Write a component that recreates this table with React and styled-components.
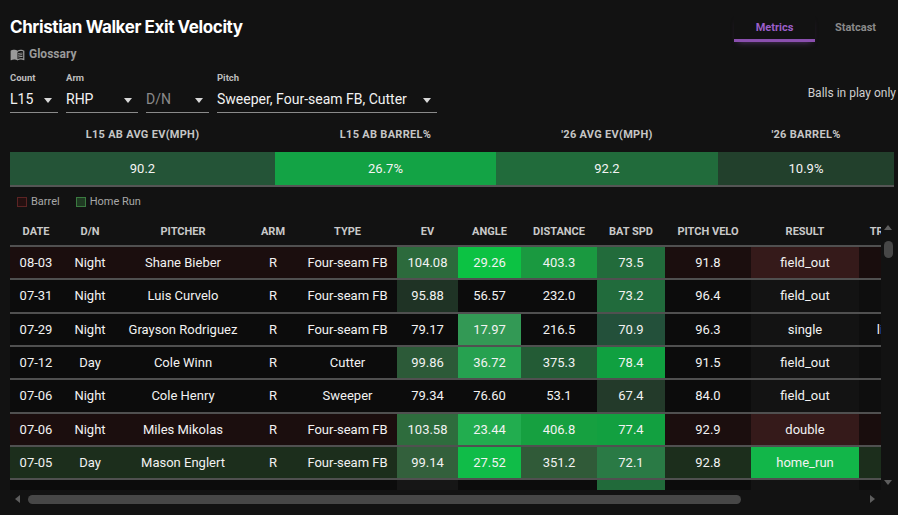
import React from 'react';
import styled, { createGlobalStyle } from 'styled-components';
import { MdMenuBook } from 'react-icons/md';

const Global = createGlobalStyle`
  html, body { margin: 0; padding: 0; background: #121212; }
  body {
    font-family: Roboto, "Noto Sans", "Liberation Sans", sans-serif;
    color: #eeeeee;
    width: 898px;
    height: 515px;
    overflow: hidden;
  }
  * { box-sizing: border-box; }
`;

const Page = styled.div`
  display: flex;
  flex-direction: column;
  padding: 14px 4px 0 10px;
`;

const TopRow = styled.div`
  display: flex;
  justify-content: space-between;
  align-items: flex-start;
`;

const TitleBlock = styled.div`
  display: flex;
  flex-direction: column;
  padding-top: 3px;
`;

const Title = styled.h1`
  margin: 0;
  font-family: Inter, "Open Sans", sans-serif;
  font-weight: 700;
  font-size: 17px;
  line-height: 20px;
  letter-spacing: -0.4px;
  color: #ffffff;
`;

const Glossary = styled.div`
  display: flex;
  align-items: center;
  gap: 4px;
  margin-top: 9px;
  font-size: 12px;
  line-height: 16px;
  font-weight: 700;
  color: #9a9a9a;
  cursor: pointer;
`;

const Tabs = styled.div`
  display: flex;
  margin-right: -2px;
`;

const Tab = styled.div`
  width: 81px;
  text-align: center;
  font-size: 11px;
  line-height: 14px;
  font-weight: 700;
  padding: 7px 0 4px;
  color: ${(p) => (p.$active ? '#9b5fc9' : '#8a8a8a')};
  border-bottom: 3px solid ${(p) => (p.$active ? '#8a4fae' : 'transparent')};
  box-shadow: ${(p) => (p.$active ? '0 4px 6px -4px rgba(155, 89, 200, 0.5)' : 'none')};
`;

const FilterRow = styled.div`
  display: flex;
  align-items: center;
  justify-content: space-between;
  margin-top: 10px;
`;

const Filters = styled.div`
  display: flex;
  gap: 8px;
`;

const Field = styled.div`
  display: flex;
  flex-direction: column;
  width: ${(p) => p.$w}px;
`;

const FieldLabel = styled.div`
  font-size: 9.5px;
  line-height: 12px;
  height: 12px;
  font-weight: 700;
  color: #bdbdbd;
  margin-bottom: 6px;
`;

const Select = styled.div`
  display: flex;
  align-items: center;
  justify-content: space-between;
  padding: 0 6px 4px 0;
  border-bottom: 1px solid #8a8a8a;
  font-size: 14px;
  line-height: 18px;
  color: ${(p) => (p.$placeholder ? '#8a8a8a' : '#f2f2f2')};
  white-space: nowrap;
`;

const Caret = styled.span`
  width: 0;
  height: 0;
  border-left: 4.5px solid transparent;
  border-right: 4.5px solid transparent;
  border-top: 5px solid #d8d8d8;
  margin-top: 2px;
`;

const BallsToggle = styled.div`
  font-size: 12px;
  color: #cfcfcf;
  margin-right: -2px;
`;

const Summary = styled.div`
  display: grid;
  grid-template-columns: 265px 221px 222px 1fr;
  margin-top: 15px;
`;

const SumLabel = styled.div`
  text-align: center;
  font-size: 11px;
  line-height: 14px;
  font-weight: 700;
  letter-spacing: 0.3px;
  color: #c6c6c6;
  padding-bottom: 10px;
`;

const SumValue = styled.div`
  height: 35px;
  display: flex;
  align-items: center;
  justify-content: center;
  font-size: 13px;
  color: #f4f4f4;
  background: ${(p) => p.$bg};
  border-bottom: 2px solid #555555;
`;

const Legend = styled.div`
  display: flex;
  align-items: center;
  gap: 16px;
  margin-top: 9px;
  padding-left: 7px;
  height: 11px;
`;

const LegendItem = styled.div`
  display: flex;
  align-items: center;
  gap: 4px;
  font-size: 11px;
  color: #a8a8a8;
`;

const Swatch = styled.span`
  width: 10px;
  height: 10px;
  border: 1px solid ${(p) => p.$border};
  background: ${(p) => p.$fill};
`;

const TableFrame = styled.div`
  margin-top: 9px;
  display: grid;
  grid-template-columns: 871px 13px;
  grid-template-rows: 274px 14px;
  width: 884px;
`;

const Viewport = styled.div`
  overflow: hidden;
`;

const VBar = styled.div`
  display: flex;
  flex-direction: column;
  align-items: center;
  padding: 9px 0 5px 1px;
`;

const HBar = styled.div`
  display: flex;
  align-items: center;
  padding: 4px 6px 0 5px;
`;

const Corner = styled.div``;

const Spacer = styled.div`
  flex: 1;
`;

const Thumb = styled.div`
  background: #474747;
  border-radius: 5px;
  width: ${(p) => p.$w}px;
  height: ${(p) => p.$h}px;
  margin: ${(p) => p.$m || 0};
`;

const Arrow = styled.span`
  width: 0;
  height: 0;
  border-style: solid;
  border-color: transparent;
  ${(p) => p.$dir === 'up' && 'border-width: 0 4.5px 5px; border-bottom-color: #5e5e5e;'}
  ${(p) => p.$dir === 'down' && 'border-width: 5px 4.5px 0; border-top-color: #5e5e5e;'}
  ${(p) => p.$dir === 'left' && 'border-width: 4px 5px 4px 0; border-right-color: #5e5e5e;'}
  ${(p) => p.$dir === 'right' && 'border-width: 4px 0 4px 5px; border-left-color: #5e5e5e;'}
`;

const Table = styled.table`
  border-collapse: separate;
  border-spacing: 0;
  table-layout: fixed;
  width: 1030px;
`;

const Th = styled.th`
  position: sticky;
  top: 0;
  z-index: 1;
  background: #121212;
  height: 31px;
  padding: 2px 0 0;
  font-size: 11px;
  font-weight: 700;
  color: #c9c9c9;
  text-align: center;
  border-bottom: 2px solid #505050;
  white-space: nowrap;
  overflow: hidden;
`;

const Tr = styled.tr`
  background: ${(p) => p.$bg};
`;

const Td = styled.td`
  height: 33.33px;
  padding: 0;
  text-align: center;
  font-size: 13px;
  color: #f2f2f2;
  white-space: nowrap;
  overflow: hidden;
  border-bottom: 2px solid #505050;
  background: ${(p) => p.$bg || 'transparent'};
`;

const COLS = [
  ['DATE', 52], ['D/N', 56], ['PITCHER', 130], ['ARM', 50], ['TYPE', 99],
  ['EV', 61], ['ANGLE', 63], ['DISTANCE', 76], ['BAT SPD', 68], ['PITCH VELO', 86],
  ['RESULT', 108], ['TRAJECTORY', 90], ['SPRAY', 91],
];

const ROWBG = { none: '#0c0c0c', barrel: '#1b0e0e', hr: '#1c2e1c' };
const RESBG = { none: '#131313', barrel: '#351a1a', hr: '#12b649' };
const TRBG = { none: '#0e0e0e', barrel: '#190d0d', hr: '#1c2e1c' };

const BASE = [
  { d: '08-03', dn: 'Night', p: 'Shane Bieber', t: 'Four-seam FB', ev: '104.08', an: '29.26', di: '403.3', bs: '73.5', pv: '91.8', r: 'field_out', tr: 'fly_ball', sp: 'Pull', k: 'barrel', c: ['#2c6a3c', '#0cc243', '#1a9940', '#226b3b'] },
  { d: '07-31', dn: 'Night', p: 'Luis Curvelo', t: 'Four-seam FB', ev: '95.88', an: '56.57', di: '232.0', bs: '73.2', pv: '96.4', r: 'field_out', tr: 'popup', sp: 'Center', k: 'none', c: ['#1f3325', null, null, '#216b3c'] },
  { d: '07-29', dn: 'Night', p: 'Grayson Rodriguez', t: 'Four-seam FB', ev: '79.17', an: '17.97', di: '216.5', bs: '70.9', pv: '96.3', r: 'single', tr: 'line_drive', sp: 'Oppo', k: 'none', c: [null, '#339955', null, '#23503a'] },
  { d: '07-12', dn: 'Day', p: 'Cole Winn', t: 'Cutter', ev: '99.86', an: '36.72', di: '375.3', bs: '78.4', pv: '91.5', r: 'field_out', tr: 'fly_ball', sp: 'Center', k: 'none', c: ['#2c5a38', '#26a150', '#235b35', '#10a040'] },
  { d: '07-06', dn: 'Night', p: 'Cole Henry', t: 'Sweeper', ev: '79.34', an: '76.60', di: '53.1', bs: '67.4', pv: '84.0', r: 'field_out', tr: 'popup', sp: 'Pull', k: 'none', c: [null, null, null, '#233a2a'] },
  { d: '07-06', dn: 'Night', p: 'Miles Mikolas', t: 'Four-seam FB', ev: '103.58', an: '23.44', di: '406.8', bs: '77.4', pv: '92.9', r: 'double', tr: 'fly_ball', sp: 'Pull', k: 'barrel', c: ['#2e6c3d', '#22ad4f', '#16a040', '#12a040'] },
  { d: '07-05', dn: 'Day', p: 'Mason Englert', t: 'Four-seam FB', ev: '99.14', an: '27.52', di: '351.2', bs: '72.1', pv: '92.8', r: 'home_run', tr: 'fly_ball', sp: 'Pull', k: 'hr', c: ['#33603c', '#10bc48', '#305a38', '#2a7a45'] },
  { d: '07-04', dn: 'Night', p: 'Andre Pallante', t: 'Sinker', ev: '86.42', an: '-12.35', di: '12.8', bs: '72.9', pv: '93.4', r: 'field_out', tr: 'ground_ball', sp: 'Center', k: 'none', c: ['#161616', null, null, '#216a3a'] },
];

function mulberry(a) {
  return () => {
    a |= 0; a = (a + 0x6d2b79f5) | 0;
    let t = Math.imul(a ^ (a >>> 15), 1 | a);
    t = (t + Math.imul(t ^ (t >>> 7), 61 | t)) ^ t;
    return ((t ^ (t >>> 14)) >>> 0) / 4294967296;
  };
}

function greenFor(v, lo, hi) {
  const t = (v - lo) / (hi - lo);
  if (t < 0.2) return null;
  const k = Math.min(1, t);
  const a = [0x1f, 0x33, 0x25];
  const b = [0x0c, 0xc2, 0x43];
  const m = a.map((x, i) => Math.round(x + (b[i] - x) * k));
  return `rgb(${m[0]}, ${m[1]}, ${m[2]})`;
}

const NAMES = ['Logan Webb', 'Zack Wheeler', 'Yu Darvish', 'Blake Snell', 'Kyle Freeland', 'Merrill Kelly', 'Joe Musgrove', 'Aaron Nola', 'Max Fried', 'Sonny Gray', 'Dylan Cease', 'Framber Valdez', 'Tyler Glasnow', 'Chris Sale', 'Kevin Gausman', 'Pablo López'];
const TYPES = ['Four-seam FB', 'Sweeper', 'Cutter'];
const RESULTS = ['field_out', 'field_out', 'single', 'field_out', 'double', 'force_out', 'grounded_into_dp'];
const TRAJ = ['ground_ball', 'fly_ball', 'line_drive', 'popup'];

function buildRows() {
  const rnd = mulberry(26);
  const rows = [...BASE];
  let month = 7;
  let day = 3;
  for (let i = 0; i < 24; i++) {
    if (rnd() < 0.55) day -= 1;
    if (day < 1) { month -= 1; day = 30; }
    const ev = 70 + rnd() * 38;
    const an = -20 + rnd() * 70;
    const di = Math.max(5, (an > 5 ? an * 9 : 15) + (ev - 80) * 6 + rnd() * 40);
    const bs = 64 + rnd() * 15;
    const pv = 82 + rnd() * 16;
    const r = RESULTS[Math.floor(rnd() * RESULTS.length)];
    rows.push({
      d: `${String(month).padStart(2, '0')}-${String(day).padStart(2, '0')}`,
      dn: rnd() < 0.7 ? 'Night' : 'Day',
      p: NAMES[Math.floor(rnd() * NAMES.length)],
      t: TYPES[Math.floor(rnd() * TYPES.length)],
      ev: ev.toFixed(2), an: an.toFixed(2), di: di.toFixed(1), bs: bs.toFixed(1), pv: pv.toFixed(1),
      r, tr: TRAJ[Math.floor(rnd() * TRAJ.length)], sp: rnd() < 0.5 ? 'Pull' : 'Center',
      k: 'none',
      c: [greenFor(ev, 90, 106), greenFor(30 - Math.abs(an - 27), 10, 30), greenFor(di, 250, 420), greenFor(bs, 68, 78)],
    });
  }
  return rows;
}

const ROWS = buildRows();

const SUMMARY = [
  ['L15 AB AVG EV(MPH)', '90.2', '#245437'],
  ['L15 AB BARREL%', '26.7%', '#13a345'],
  ["'26 AVG EV(MPH)", '92.2', '#216b3b'],
  ["'26 BARREL%", '10.9%', '#22402c'],
];

export default function App() {
  return (
    <>
      <Global />
      <Page>
        <TopRow>
          <TitleBlock>
            <Title>Christian Walker Exit Velocity</Title>
            <Glossary>
              <MdMenuBook size={15} color="#9a9a9a" />
              Glossary
            </Glossary>
          </TitleBlock>
          <Tabs>
            <Tab $active>Metrics</Tab>
            <Tab>Statcast</Tab>
          </Tabs>
        </TopRow>

        <FilterRow>
          <Filters>
            <Field $w={48}>
              <FieldLabel>Count</FieldLabel>
              <Select>L15<Caret /></Select>
            </Field>
            <Field $w={72}>
              <FieldLabel>Arm</FieldLabel>
              <Select>RHP<Caret /></Select>
            </Field>
            <Field $w={63}>
              <FieldLabel />
              <Select $placeholder>D/N<Caret /></Select>
            </Field>
            <Field $w={220}>
              <FieldLabel>Pitch</FieldLabel>
              <Select>Sweeper, Four-seam FB, Cutter<Caret /></Select>
            </Field>
          </Filters>
          <BallsToggle>Balls in play only</BallsToggle>
        </FilterRow>

        <Summary>
          {SUMMARY.map(([l]) => <SumLabel key={l}>{l}</SumLabel>)}
          {SUMMARY.map(([l, v, bg]) => <SumValue key={l + v} $bg={bg}>{v}</SumValue>)}
        </Summary>

        <Legend>
          <LegendItem><Swatch $border="#5c2424" $fill="#241010" />Barrel</LegendItem>
          <LegendItem><Swatch $border="#3a7a40" $fill="#1f3a22" />Home Run</LegendItem>
        </Legend>

        <TableFrame>
          <Viewport>
            <Table>
              <colgroup>
                {COLS.map(([n, w]) => <col key={n} style={{ width: w }} />)}
              </colgroup>
              <thead>
                <tr>{COLS.map(([n]) => <Th key={n}>{n}</Th>)}</tr>
              </thead>
              <tbody>
                {ROWS.map((r, i) => (
                  <Tr key={i} $bg={ROWBG[r.k]}>
                    <Td>{r.d}</Td>
                    <Td>{r.dn}</Td>
                    <Td>{r.p}</Td>
                    <Td>R</Td>
                    <Td>{r.t}</Td>
                    <Td $bg={r.c[0]}>{r.ev}</Td>
                    <Td $bg={r.c[1]}>{r.an}</Td>
                    <Td $bg={r.c[2]}>{r.di}</Td>
                    <Td $bg={r.c[3]}>{r.bs}</Td>
                    <Td>{r.pv}</Td>
                    <Td $bg={RESBG[r.k]}>{r.r}</Td>
                    <Td $bg={TRBG[r.k]}>{r.tr}</Td>
                    <Td $bg={TRBG[r.k]}>{r.sp}</Td>
                  </Tr>
                ))}
              </tbody>
            </Table>
          </Viewport>
          <VBar>
            <Arrow $dir="up" />
            <Thumb $w={9} $h={17} $m="11px 0 0" />
            <Spacer />
            <Arrow $dir="down" />
          </VBar>
          <HBar>
            <Arrow $dir="left" />
            <Thumb $w={713} $h={9} $m="0 0 0 8px" />
            <Spacer />
            <Arrow $dir="right" />
          </HBar>
          <Corner />
        </TableFrame>
      </Page>
    </>
  );
}
